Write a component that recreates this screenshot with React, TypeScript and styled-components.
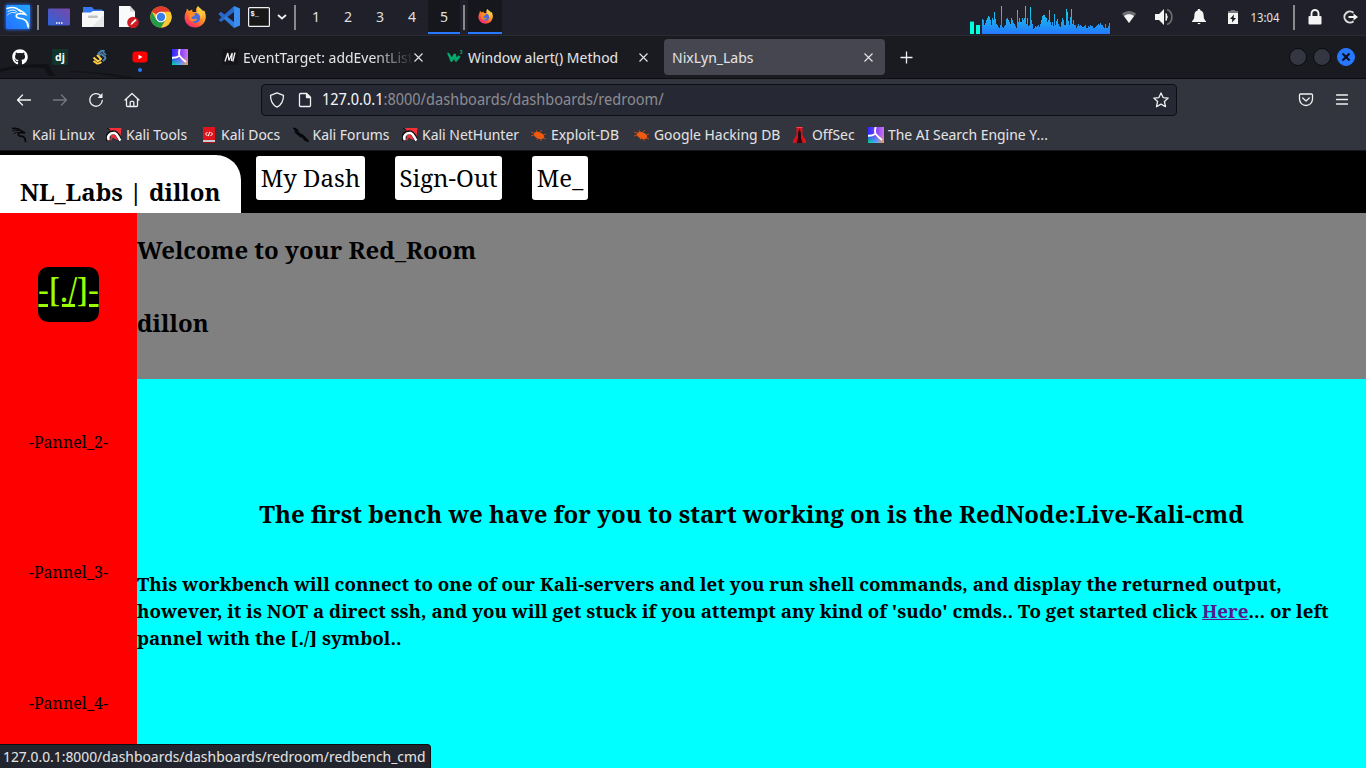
import React from 'react';
import styled, { createGlobalStyle } from 'styled-components';
import { FaGithub } from 'react-icons/fa';

const ui = '"Noto Sans Display", "Noto Sans", sans-serif';

const Global = createGlobalStyle`
  * { box-sizing: border-box; }
  body { margin: 0; overflow: hidden; background: #000; }
  svg { display: block; flex: none; }
`;

const Screen = styled.div`
  width: 1366px;
  height: 768px;
  display: flex;
  flex-direction: column;
  overflow: hidden;
  font-family: ${ui};
  font-size: 14.8px;
  color: #e2e2e2;
  position: relative;
`;

/* ---------- desktop panel ---------- */
const Panel = styled.header`
  height: 36px;
  flex: none;
  display: flex;
  background: #1f2029;
  border-bottom: 1px solid #2b2c31;
`;
const Slot = styled.div<{ $w: number }>`
  width: ${(p) => p.$w}px;
  height: 34px;
  flex: none;
  display: flex;
  align-items: center;
  justify-content: center;
`;
const Divider = styled.i`
  width: 2px;
  height: 25px;
  background: #89898c;
`;
const Workspace = styled(Slot)<{ $active?: boolean }>`
  font-size: 15px;
  color: #dedede;
  background: ${(p) => (p.$active ? '#16171c' : 'transparent')};
  border-bottom: 2px solid ${(p) => (p.$active ? '#2777ff' : 'transparent')};
`;
const Spacer = styled.div`
  flex: 1;
`;
const Clock = styled(Slot)`
  font-size: 12px;
  padding-right: 2px;
`;

/* ---------- tabs ---------- */
const TabStrip = styled.div`
  height: 43px;
  flex: none;
  display: flex;
  align-items: center;
  background: #1a1b20;
  border-bottom: 1px solid #0d0e12;
  position: relative;
`;
const Pinned = styled.div`
  width: 40px;
  height: 36px;
  display: flex;
  align-items: center;
  justify-content: center;
  position: relative;
`;
const Dot = styled.i`
  position: absolute;
  left: 18px;
  bottom: 3px;
  width: 4px;
  height: 4px;
  border-radius: 50%;
  background: #2777ff;
`;
const Wallpaper = styled.svg`
  position: absolute;
  left: 0;
  bottom: 0;
`;
const Tab = styled.div<{ $w: number; $active?: boolean; $lead: number }>`
  width: ${(p) => p.$w}px;
  height: 36px;
  padding: 0 8px 0 ${(p) => p.$lead}px;
  display: flex;
  align-items: center;
  border-radius: 4px;
  background: ${(p) => (p.$active ? '#45464f' : 'transparent')};
`;
const TabTitle = styled.span<{ $fade?: boolean }>`
  flex: 1;
  min-width: 0;
  white-space: nowrap;
  line-height: 20px;
  ${(p) => p.$fade && 'mask-image: linear-gradient(to right, #000 76%, transparent 100%);'}
`;
const Favicon = styled.span`
  width: 16px;
  margin-right: 5px;
`;
const WindowButtons = styled.div`
  display: flex;
  gap: 6px;
  margin-left: auto;
  padding-right: 11px;
`;
const WindowButton = styled.div<{ $close?: boolean }>`
  width: 18px;
  height: 18px;
  border-radius: 50%;
  display: flex;
  align-items: center;
  justify-content: center;
  border: 1px solid ${(p) => (p.$close ? '#2777ff' : '#0b0b0e')};
  background: ${(p) => (p.$close ? '#2777ff' : '#343742')};
`;

/* ---------- toolbar ---------- */
const Toolbar = styled.div`
  height: 41px;
  flex: none;
  display: flex;
  align-items: center;
  background: #32343e;
  padding-left: 6px;
`;
const Tool = styled.div`
  width: 36px;
  display: flex;
  justify-content: center;
`;
const AddressBar = styled.div`
  margin-left: 111px;
  width: 916px;
  height: 32px;
  display: flex;
  align-items: center;
  gap: 12px;
  padding: 0 7px;
  border: 1px solid #0d0e12;
  border-radius: 4px;
  background: #262834;
  font-size: 15.45px;
  line-height: 22px;
  color: #8a8b90;
`;
const Url = styled.span`
  flex: 1;
  margin: -2px 0 0 -3px;
  b { font-weight: 400; color: #f4f4f4; }
`;
const MenuTools = styled.div`
  display: flex;
  margin-left: 111px;
`;

/* ---------- bookmarks ---------- */
const Bookmarks = styled.div`
  height: 31px;
  flex: none;
  display: flex;
  align-items: center;
  padding: 0 0 1px 12px;
  background: #32343e;
  border-bottom: 1px solid #15161b;
`;
const Bookmark = styled.div<{ $w: number }>`
  width: ${(p) => p.$w}px;
  flex: none;
  display: flex;
  align-items: center;
  gap: 4px;
  white-space: nowrap;
  line-height: 20px;
  font-size: 14.75px;
  span { margin-top: -1px; }
`;

/* ---------- web page ---------- */
const Page = styled.main`
  flex: 1;
  min-height: 0;
  display: flex;
  flex-direction: column;
  font-family: "Noto Serif", "DejaVu Serif", serif;
  font-size: 16px;
  color: #000;
  background: #000;
`;
const SiteNav = styled.nav`
  height: 62px;
  flex: none;
  display: flex;
  align-items: flex-start;
`;
const Brand = styled.div`
  width: 241px;
  height: 58px;
  margin: 4px 15px 0 0;
  padding: 20px 0 0 20px;
  font-size: 24px;
  font-weight: 700;
  line-height: 33px;
  white-space: nowrap;
  background: #fff;
  border-top-right-radius: 25px;
`;
const NavButton = styled.a`
  margin: 5px 29.7px 0 0;
  height: 44px;
  padding: 5px 4.8px;
  font-size: 24px;
  line-height: 33px;
  background: #fff;
  border-radius: 3px;
`;
const Body = styled.div`
  flex: 1;
  min-height: 0;
  display: flex;
`;
const Side = styled.aside`
  width: 137px;
  padding-top: 16px;
  background: #f00;
  flex: none;
`;
const SideCell = styled.div<{ $first?: boolean }>`
  height: 130.6px;
  margin-bottom: ${(p) => (p.$first ? 17 : 0)}px;
  display: flex;
  align-items: center;
  justify-content: center;
`;
const ShellLink = styled.a`
  height: 55px;
  margin-top: 1px;
  font-size: 32px;
  line-height: 44px;
  padding-top: 1px;
  color: #9f0;
  background: #000;
  border-radius: 10px;
  text-decoration: underline;
`;
const Content = styled.section`
  flex: 1;
  background: #0ff;
`;
const Welcome = styled.div`
  height: 166px;
  padding-top: 20px;
  background: #808080;
`;
const Heading = styled.h2<{ $center?: boolean }>`
  margin: 0 0 40px;
  font-size: 24px;
  line-height: 33px;
  ${(p) => p.$center && 'text-align: center; margin: 118px 0 0;'}
`;
const Intro = styled.h3`
  margin: 40px 0 0;
  font-size: 18.72px;
  line-height: 27px;
  letter-spacing: 0.007px;
  white-space: nowrap;
  a { color: #551a8b; text-decoration: underline; }
`;
const Status = styled.div`
  position: absolute;
  left: 0;
  bottom: 0;
  width: 431px;
  height: 24px;
  padding-left: 3px;
  font-size: 14.74px;
  line-height: 23px;
  white-space: nowrap;
  background: #23252e;
  border: 1px solid #0d0e12;
  border-left: 0;
  border-bottom: 0;
  border-top-right-radius: 4px;
`;

/* ---------- drawings ---------- */
const KaliLogo = () => (
  <svg width="32" height="34" viewBox="0 0 32 34">
    <defs>
      <linearGradient id="kl" x1="0" y1="1" x2="1" y2="0"><stop offset="0" stopColor="#2470ff" /><stop offset="1" stopColor="#22a5ff" /></linearGradient>
      <filter id="kg" x="-30%" y="-30%" width="160%" height="160%"><feGaussianBlur stdDeviation="1.5" /></filter>
    </defs>
    <rect x="4" y="4" width="26" height="26" rx="3" fill="#2470ff" opacity=".75" filter="url(#kg)" />
    <rect x="5" y="5" width="24" height="24" rx="1" fill="url(#kl)" />
    <g fill="none" stroke="#fff" strokeLinecap="round">
      <path d="M6 8.500C11 6.500 16 7.500 19.500 11.500" strokeWidth="1.500" />
      <path d="M7 11.500C11 9 14 10 16 12" strokeWidth="1" />
      <path d="M6.500 15C9.500 12 12 12 15 13" strokeWidth=".8" />
      <path d="M18 10C20 11 22.500 11.500 24.500 14.500L20 13.500C15 13.500 13.500 16.500 17.500 18C23 18.500 27 20.500 27 26.500" strokeWidth="1.700" />
      <path d="M23.500 19.500C26.500 21 28 24 27.500 28" strokeWidth=".8" />
    </g>
  </svg>
);
const DesktopIcon = () => (
  <svg width="22" height="18" viewBox="0 0 22 18">
    <defs><linearGradient id="dk" x1="0" y1="1" x2="1" y2="0"><stop offset="0" stopColor="#2b63d8" /><stop offset="1" stopColor="#7a48a8" /></linearGradient></defs>
    <rect width="22" height="17" rx="1" y=".5" fill="url(#dk)" />
    <path d="M8 15h1.500M10.500 15h1.500M13 15h1.500" stroke="#fff" strokeWidth="1.300" />
  </svg>
);
const FolderIcon = () => (
  <svg width="22" height="20" viewBox="0 0 22 20">
    <path d="M1 0h9l2 2.500h8.500V8H1z" fill="#3477f0" />
    <path d="M0 5.500h8.500L11 4h11v16H0z" fill="#f8f8f8" />
    <path d="M22 8v12H10z" fill="#e8e8e8" />
    <rect x="6" y="8.500" width="10" height="2.500" rx="1.200" fill="#bfc2c4" />
  </svg>
);
const NoteIcon = () => (
  <svg width="22" height="22" viewBox="0 0 22 22">
    <path d="M2 0h11l5 5.500V21H2z" fill="#fafafa" /><path d="M13 0l5 5.500h-5z" fill="#d4d6d8" />
    <circle cx="16" cy="16.500" r="5.800" fill="#d01c20" />
    <path d="M13.500 19l.6-2 4.200-4 1.300 1.300-4.200 4z" fill="#fff" />
  </svg>
);
const ChromeIcon = () => (
  <svg width="22" height="22" viewBox="0 0 22 22">
    <circle cx="11" cy="11" r="10.600" fill="#fcc934" />
    <path d="M11 11L1.820 5.700A10.600 10.600 0 0 1 20.180 5.700z" fill="#e33b2e" />
    <path d="M11 5.700H20.180A10.600 10.600 0 0 1 11 21.600L15.600 13.650z" fill="#fcc934" />
    <path d="M1.820 5.700L6.410 13.650 11 16.300 15.600 13.650 11 21.600A10.600 10.600 0 0 1 1.820 5.700z" fill="#249a4b" />
    <circle cx="11" cy="11" r="5.300" fill="#fff" /><circle cx="11" cy="11" r="4.200" fill="#397fe8" />
  </svg>
);
const FirefoxIcon = ({ s }: { s: number }) => (
  <svg width={s} height={s} viewBox="0 0 22 22">
    <defs>
      <linearGradient id="ff" x1=".85" y1=".1" x2=".2" y2="1"><stop offset="0" stopColor="#ffe14a" /><stop offset=".45" stopColor="#ff8a24" /><stop offset=".8" stopColor="#ff4050" /><stop offset="1" stopColor="#e8208a" /></linearGradient>
    </defs>
    <path d="M14 0c1 2 4 3 5 5l1.200-.6C22.500 9 22.300 14 19.500 17.500 15.500 22.500 7.500 23 3.200 18.300-.3 14.500 0 9 2.500 5l.3-2.400L5.200 5l3-1.500L8.500 6h4C11.500 4 12.500 1.500 14 0z" fill="url(#ff)" />
    <circle cx="11.300" cy="12" r="4.900" fill="#4a6ae0" />
    <path d="M5 8c2-2 5-1.500 6.500.5L9 10.500c-2 .5-1.800 2.500.5 2.800 1.500 0 2-.8 3.500-.3-1 3-6 3.500-7.500.5z" fill="#ff8a20" />
    <path d="M13 6c3 1 4.500 4 3.500 7 2-2 2-6-.5-8z" fill="#ffd23e" />
  </svg>
);
const CodeIcon = () => (
  <svg width="22" height="22" viewBox="0 0 22 22">
    <path d="M16 0l6 2.600v16.800L16 22z" fill="#3c8fee" />
    <path d="M16 0v6L3 16 .5 14z" fill="#2867c8" /><path d="M16 22v-6L3 6 .5 8z" fill="#2f7adc" />
    <path d="M.5 8L3 6l5 4-3 2.500z" fill="#2867c8" />
  </svg>
);
const TerminalIcon = () => (
  <svg width="22" height="20" viewBox="0 0 22 20">
    <rect x=".6" y=".6" width="20.800" height="18.800" rx="1" fill="#181818" stroke="#f0f0f0" strokeWidth="1.200" />
    <text x="2.500" y="8.500" fontFamily="Liberation Mono, monospace" fontWeight="700" fontSize="7" fill="#fff">$_</text>
  </svg>
);
const levels = [
  15,14,9,11,14,16,18,17,14,9,16,14,22,15,10,9,7,6,9,28,7,6,8,9,15,16,14,12,10,16,14,11,10,8,6,24,12,16,12,12,16,14,16,28,10,16,8,9,27,14,10,5,6,8,7,8,9,7,10,14,18,19,19,17,16,12,14,24,12,9,12,8,20,9,13,15,10,8,7,12,16,14,9,9,25,22,13,9,17,25,10,14,9,9,6,8,10,8,9,8,7,7,8,9,6,6,8,7,9,8,8,6,6,7,8,9,10,9,11,9,9,7,6,10,6,6,8,11,
];
const Spectrum = () => (
  <svg width="144" height="34" viewBox="0 0 144 34" shapeRendering="crispEdges">
    <defs><linearGradient id="sp" gradientUnits="userSpaceOnUse" x1="0" y1="6" x2="0" y2="34"><stop offset="0" stopColor="#15dce0" /><stop offset="1" stopColor="#2478ff" /></linearGradient></defs>
    <rect x="2" y="22" width="4" height="12" fill="#00ffdd" /><rect x="2" y="21" width="4" height="1" fill="#087d70" />
    <rect x="8" y="25" width="4" height="9" fill="#00ffdd" />
    <path fill="url(#sp)" d={levels.map((h, i) => `M${14 + i} 34v-${h}h1v${h}z`).join('')} />
  </svg>
);
const WifiIcon = () => (
  <svg width="16" height="14" viewBox="0 0 16 14"><path d="M1 3.800C5 0 11 0 15 3.800L8 13z" fill="#6d6d70" /><path d="M3 6C6 3.600 10 3.600 13 6L8 13z" fill="#f4f4f4" /></svg>
);
const VolumeIcon = () => (
  <svg width="18" height="18" viewBox="0 0 18 18" fill="none"><path d="M0 6h4l5-5v16l-5-5H0z" fill="#f4f4f4" /><path d="M11 5.500q2.500 3.500 0 7z" fill="#f4f4f4" stroke="#f4f4f4" /><path d="M12 1.500C18.500 4 18.500 14 12 16.500" stroke="#6d6d70" strokeWidth="1.700" /></svg>
);
const BellIcon = () => (
  <svg width="14" height="16" viewBox="0 0 14 16" fill="#f4f4f4"><path d="M7 0c1 0 1.500.7 1.500 1.500C11 2.200 11.700 4.500 11.700 7c0 2.500.8 4 2.300 5.200V13H0v-.8C1.500 11 2.300 9.500 2.300 7c0-2.500.7-4.800 3.200-5.500C5.500.7 6 0 7 0zM5.300 14h3.400q-1.700 2.500-3.400 0z" /></svg>
);
const BatteryIcon = () => (
  <svg width="10" height="14" viewBox="0 0 10 14"><path d="M3 0h4v1h3v2H0V1h3z" fill="#77777a" /><path d="M0 3h10v11H0z" fill="#f4f4f4" /><path d="M6 4.500L2 9h2.300L4 12.500 8 8H5.600z" fill="#15161b" /></svg>
);
const LockIcon = () => (
  <svg width="14" height="16" viewBox="0 0 14 16"><rect x=".5" y="7" width="13" height="8.500" rx="1" fill="#f4f4f4" /><path d="M3.500 7.500V4.500a3.500 3.500 0 0 1 7 0v3" fill="none" stroke="#f4f4f4" strokeWidth="1.900" /></svg>
);
const LogoutIcon = () => (
  <svg width="15" height="14" viewBox="0 0 15 14"><path d="M10.500 2.800A5.500 5.500 0 1 0 10.500 11.200" fill="none" stroke="#dcdcdc" strokeWidth="2" /><path d="M5.500 6h5V3.500L15 7l-4.500 3.500V8h-5z" fill="#f4f4f4" /></svg>
);
const Star3 = () => (
  <svg width="16" height="16" viewBox="0 0 16 16">
    <defs>
      <linearGradient id="ph" x1="0" y1="0" x2="1" y2="0"><stop offset="0" stopColor="#2a2cff" /><stop offset=".5" stopColor="#8040f5" /><stop offset="1" stopColor="#d070f0" /></linearGradient>
      <linearGradient id="pv" x1="0" y1="0" x2="1" y2="0"><stop offset="0" stopColor="#00d890" /><stop offset=".5" stopColor="#4ab0ff" /><stop offset="1" stopColor="#ff9a40" /></linearGradient>
      <linearGradient id="pf" x1="0" y1="0" x2="0" y2="1"><stop offset=".45" stopColor="#fff" stopOpacity="0" /><stop offset="1" stopColor="#fff" /></linearGradient>
      <mask id="pm"><rect width="16" height="16" fill="url(#pf)" /></mask>
    </defs>
    <rect width="16" height="16" fill="url(#ph)" /><rect width="16" height="16" fill="url(#pv)" mask="url(#pm)" />
    <path d="M7.700 0Q6.500 4 7.500 6.700Q4 9 0 8.700M7.500 6.700Q10 10 14 13" fill="none" stroke="#fff" strokeWidth="1.900" />
  </svg>
);
const Close = ({ c = '#e6e6e6', w = 1.1, s = 9 }: { c?: string; w?: number; s?: number }) => (
  <svg width={s} height={s} viewBox="0 0 9 9"><path d="M.5 .5l8 8M8.500 .5l-8 8" stroke={c} strokeWidth={w} /></svg>
);
const line = { fill: 'none', stroke: '#f0f0f0', strokeWidth: 1.3, strokeLinecap: 'round' as const, strokeLinejoin: 'round' as const };
const Dragon = ({ flip }: { flip?: boolean }) => (
  <svg width="16" height="16" viewBox="0 0 16 16" fill="none" stroke="#08080a" strokeLinecap="round">
    {flip ? <><path d="M2 2l4 5 4 2 4 4.500" strokeWidth="2.400" /><path d="M0 1l5 2M2 5l6 5M8 8l4 5.500M13 12l2.500 2.500" strokeWidth="1.200" /></> : <>
      <path d="M.5 1.500Q6 .5 9.500 4L13 6 9 5.500Q4 7 8 9.200 13.500 9 13.500 14.500" strokeWidth="1.700" />
      <path d="M1 4q4-2 6 0M2 6.500q3-2.500 5-1" /></>}
  </svg>
);
const ToolsIcon = () => (
  <svg width="16" height="16" viewBox="0 0 16 16">
    <path d="M3 1h12.500L14 14 5 10z" fill="#f2303a" />
    <path d="M2.500 13.500C-.5 9 4 4.500 8.500 5.500 12 6.500 13 11 14.500 13.500" fill="none" stroke="#101014" strokeWidth="4.200" />
    <path d="M3 13C.5 9 4.500 5.500 8.500 6 11.500 7 12 10.500 14.500 13.500" fill="none" stroke="#fff" strokeWidth="2.600" />
    <path d="M5 13.500Q4.500 10 8 10" fill="none" stroke="#f2303a" strokeWidth="1.300" />
    <path d="M1 1l3.500 2.500" stroke="#101014" />
  </svg>
);
const DocsIcon = () => (
  <svg width="16" height="16" viewBox="0 0 16 16"><path d="M2 0h12v13H2z" fill="#e0141c" /><path d="M2 13h12v2H2z" fill="#c8ccd4" /><path d="M2 15h12v1H2z" fill="#b01018" /><path d="M6.500 5L4.500 7l2 2M9.500 5l2 2-2 2M8.700 4.800L7.300 9.200" fill="none" stroke="#fff" /></svg>
);
const BugIcon = () => (
  <svg width="16" height="16" viewBox="0 0 16 16"><ellipse cx="8" cy="8.500" rx="5.500" ry="3.300" transform="rotate(22 8 8.500)" fill="#ee5a10" /><path d="M3 6L0 5M3 8L0 9M6 5L5 3M9 5l2-2M12 8l3-1M12 11l3 1M7 11l-1 2M10 12v2" stroke="#c84e14" strokeWidth=".9" /></svg>
);
const OffsecIcon = () => (
  <svg width="16" height="16" viewBox="0 0 16 16"><path d="M4.500 0h6v8l3.500 5.500V16H1v-2.500L4.500 8z" fill="#d8131b" /><path d="M7.500 1.500L9 6v5l1.500 5h-6L6 11V6z" fill="#2a0a0e" /><path d="M4.500 0h6v1h-6z" fill="#f44" /></svg>
);
const DjangoIcon = () => (
  <svg width="16" height="16" viewBox="0 0 16 16"><rect width="16" height="16" rx="1" fill="#11352b" /><text x="3" y="11.500" fontFamily="Noto Sans, sans-serif" fontWeight="700" fontSize="10.500" fill="#fff">dj</text></svg>
);
const StackIcon = () => (
  <svg width="16" height="16" viewBox="0 0 16 16" fill="none" strokeLinejoin="round">
    <path d="M8.500 6.500L6.500 4.500 9 2.200Q11 1 12.500 2.500M9 4.500l4 3.500Q14 9.500 12 11L10.500 12" stroke="#4b86b4" strokeWidth="2" />
    <path d="M11 3l3 3" stroke="#4b86b4" strokeWidth="1.600" />
    <path d="M1.500 8.500l4 3.500Q7 12.500 9 10L5 6M1.500 12l3.500 2.500Q7 15 9.500 13" stroke="#ffcf45" strokeWidth="2" />
  </svg>
);
const YoutubeIcon = () => (
  <svg width="16" height="16" viewBox="0 0 16 16"><rect x=".5" y="2.500" width="15" height="11" rx="3" fill="#f00" /><path d="M6.500 5.700v4.600L10.500 8z" fill="#fff" /></svg>
);
const MdnIcon = () => (
  <svg width="16" height="16" viewBox="0 0 16 16"><rect width="16" height="16" fill="#151519" /><path d="M3 12.500L5.800 4l1.200 7.500L10.200 4l-.7 8M13 3.500L10.800 12.500" fill="none" stroke="#f0f0f0" strokeWidth="1.300" strokeLinejoin="bevel" /></svg>
);
const W3Icon = () => (
  <svg width="16" height="16" viewBox="0 0 16 16"><path d="M.5 4.500Q2 4.500 4.500 11.500L7.700 6 9 11.500 12.500 7" fill="none" stroke="#04aa6d" strokeWidth="2.700" strokeLinejoin="round" /><text x="12.800" y="5" fontFamily="Noto Sans, sans-serif" fontSize="5" fontWeight="700" fill="#04aa6d">3</text></svg>
);

const bookmarks: [React.ReactNode, string, number][] = [
  [<Dragon />, 'Kali Linux', 94],
  [<ToolsIcon />, 'Kali Tools', 95],
  [<DocsIcon />, 'Kali Docs', 91.5],
  [<Dragon flip />, 'Kali Forums', 109.5],
  [<ToolsIcon />, 'Kali NetHunter', 129],
  [<BugIcon />, 'Exploit-DB', 103],
  [<BugIcon />, 'Google Hacking DB', 158],
  [<OffsecIcon />, 'OffSec', 76],
  [<Star3 />, 'The AI Search Engine Y…', 190],
];

export default function App() {
  return (
    <Screen>
      <Global />
      <Panel>
        <Slot $w={33}><KaliLogo /></Slot>
        <Slot $w={10}><Divider /></Slot>
        <Slot $w={32}><DesktopIcon /></Slot>
        <Slot $w={36}><FolderIcon /></Slot>
        <Slot $w={34}><NoteIcon /></Slot>
        <Slot $w={32}><ChromeIcon /></Slot>
        <Slot $w={36}><FirefoxIcon s={22} /></Slot>
        <Slot $w={31}><CodeIcon /></Slot>
        <Slot $w={30}><TerminalIcon /></Slot>
        <Slot $w={16}><svg width="10" height="6" viewBox="0 0 10 6"><path d="M1 1l4 3.500L9 1" fill="none" stroke="#eee" strokeWidth="1.800" /></svg></Slot>
        <Slot $w={10}><Divider /></Slot>
        {['1', '2', '3', '4', '5'].map((n) => (
          <Workspace key={n} $w={32} $active={n === '5'}>{n}</Workspace>
        ))}
        <Slot $w={8}><Divider /></Slot>
        <Workspace $w={34} $active><FirefoxIcon s={15} /></Workspace>
        <Spacer />
        <Slot $w={144}><Spectrum /></Slot>
        <Slot $w={34}><WifiIcon /></Slot>
        <Slot $w={36}><VolumeIcon /></Slot>
        <Slot $w={34}><BellIcon /></Slot>
        <Slot $w={34}><BatteryIcon /></Slot>
        <Clock $w={32}>13:04</Clock>
        <Slot $w={24}><Divider /></Slot>
        <Slot $w={18}><LockIcon /></Slot>
        <Slot $w={10} />
        <Slot $w={32}><LogoutIcon /></Slot>
      </Panel>

      <TabStrip>
        <Wallpaper width="140" height="14" viewBox="0 0 140 14">
          <path d="M0 5Q20 0 48 0L55 12H49L44 4Q20 2 0 8z" fill="#101114" />
          <path d="M70 7Q110 8 136 14H122Q100 9 70 8z" fill="#131418" />
        </Wallpaper>
        <Pinned><FaGithub size={16} color="#fff" /></Pinned>
        <Pinned><DjangoIcon /></Pinned>
        <Pinned><StackIcon /></Pinned>
        <Pinned><YoutubeIcon /><Dot /></Pinned>
        <Pinned><Star3 /></Pinned>
        <Tab $w={231} $lead={22}>
          <Favicon><MdnIcon /></Favicon>
          <TabTitle $fade>EventTarget: addEventList</TabTitle>
          <Close />
        </Tab>
        <Tab $w={233} $lead={16}>
          <Favicon><W3Icon /></Favicon>
          <TabTitle>Window alert() Method</TabTitle>
          <Close />
          <Slot $w={8} />
        </Tab>
        <Tab $w={221} $lead={8} $active>
          <TabTitle>NixLyn_Labs</TabTitle>
          <Close />
          <Slot $w={4} />
        </Tab>
        <Slot $w={43}>
          <svg width="13" height="13" viewBox="0 0 13 13"><path d="M6.500 .5v12M.5 6.500h12" stroke="#f0f0f0" strokeWidth="1.300" /></svg>
        </Slot>
        <WindowButtons>
          <WindowButton /><WindowButton />
          <WindowButton $close><Close c="#0a1020" w={2.4} s={8} /></WindowButton>
        </WindowButtons>
      </TabStrip>

      <Toolbar>
        <Tool><svg width="16" height="16" viewBox="0 0 16 16" {...line}><path d="M14.500 8H1.500M6.500 3L1.500 8l5 5" /></svg></Tool>
        <Tool><svg width="16" height="16" viewBox="0 0 16 16" {...line} stroke="#77787f"><path d="M1.500 8h13M9.500 3l5 5-5 5" /></svg></Tool>
        <Tool><svg width="16" height="16" viewBox="0 0 16 16" {...line}><path d="M14.300 8.500A6.300 6.300 0 1 1 12.500 3.500" /><path d="M14.500 1v5h-5z" fill="#f0f0f0" stroke="none" /></svg></Tool>
        <Tool><svg width="16" height="16" viewBox="0 0 16 16" {...line}><path d="M1 8L8 1.500 15 8M2.500 7v6.500q0 1 1 1h9q1 0 1-1V7M6.200 14.300v-4q0-1 1-1h1.600q1 0 1 1v4" /></svg></Tool>
        <AddressBar>
          <svg width="16" height="16" viewBox="0 0 16 16" {...line}><path d="M8 .8l6.500 2.500C14.500 9 12.500 13 8 15.200 3.500 13 1.500 9 1.500 3.300z" /></svg>
          <svg width="16" height="16" viewBox="0 0 16 16" {...line}><path d="M3.500 1.500h6l4 4v8q0 1-1 1h-9q-1 0-1-1v-11q0-1 1-1z" /><path d="M9.500 1.500v4h4z" fill="#f0f0f0" /></svg>
          <Url><b>127.0.0.1</b>:8000/dashboards/dashboards/redroom/</Url>
          <svg width="16" height="16" viewBox="0 0 16 16" {...line}><path d="M8 .9l2.100 4.700 5.100.5-3.800 3.400 1.100 5.200L8 12.100l-4.500 2.600 1.100-5.200L.8 6.100l5.100-.5z" /></svg>
        </AddressBar>
        <MenuTools>
          <Tool><svg width="16" height="16" viewBox="0 0 16 16" {...line}><path d="M2.500 2h11q1 0 1 1v4a6.500 6.500 0 0 1-13 0V3q0-1 1-1zM4.700 6L8 9l3.300-3" /></svg></Tool>
          <Tool><svg width="14" height="16" viewBox="0 0 14 16" {...line}><path d="M1.500 3h11M1.500 7.500h11M1.500 12h11" /></svg></Tool>
        </MenuTools>
      </Toolbar>

      <Bookmarks>
        {bookmarks.map(([icon, label, w]) => (
          <Bookmark key={label} $w={w}>{icon}<span>{label}</span></Bookmark>
        ))}
      </Bookmarks>

      <Page>
        <SiteNav>
          <Brand>NL_Labs | dillon</Brand>
          <NavButton>My Dash</NavButton>
          <NavButton>Sign-Out</NavButton>
          <NavButton>Me_</NavButton>
        </SiteNav>
        <Body>
          <Side>
            <SideCell $first><ShellLink>-[./]-</ShellLink></SideCell>
            <SideCell>-Pannel_2-</SideCell>
            <SideCell>-Pannel_3-</SideCell>
            <SideCell>-Pannel_4-</SideCell>
          </Side>
          <Content>
            <Welcome>
              <Heading>Welcome to your Red_Room</Heading>
              <Heading>dillon</Heading>
            </Welcome>
            <Heading $center>The first bench we have for you to start working on is the RedNode:Live-Kali-cmd</Heading>
            <Intro>
              This workbench will connect to one of our Kali-servers and let you run shell commands, and display the returned output,<br />
              however, it is NOT a direct ssh, and you will get stuck if you attempt any kind of 'sudo' cmds.. To get started click <a>Here</a>... or left<br />
              pannel with the [./] symbol..
            </Intro>
          </Content>
        </Body>
      </Page>
      <Status>127.0.0.1:8000/dashboards/dashboards/redroom/redbench_cmd</Status>
    </Screen>
  );
}
